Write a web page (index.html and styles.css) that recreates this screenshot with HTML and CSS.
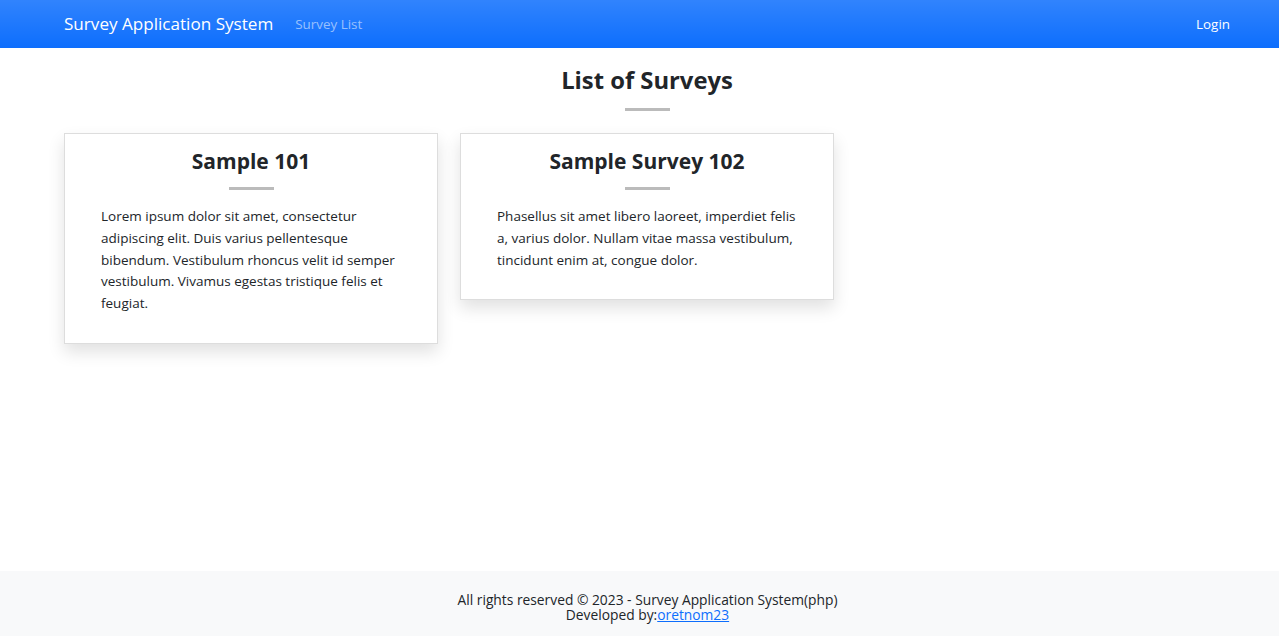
FILE: index.html
```html
<!DOCTYPE html>
<html lang="en">
<head>
<meta charset="utf-8">
<title>Survey Application System</title>
<link rel="stylesheet" href="styles.css">
</head>
<body>
<div class="page">
  <nav class="navbar">
    <div class="nav-inner">
      <a class="brand" href="#">Survey Application System</a>
      <a class="nav-link muted" href="#">Survey List</a>
      <span class="spacer"></span>
      <a class="nav-link" href="#">Login</a>
    </div>
  </nav>
  <main class="main">
    <h2 class="page-title">List of Surveys</h2>
    <hr class="bar">
    <div class="grid">
      <div class="card">
        <h3 class="card-title">Sample 101</h3>
        <hr class="bar">
        <p class="card-text">Lorem ipsum dolor sit amet, consectetur adipiscing elit. Duis varius pellentesque bibendum. Vestibulum rhoncus velit id semper vestibulum. Vivamus egestas tristique felis et feugiat.</p>
      </div>
      <div class="card">
        <h3 class="card-title">Sample Survey 102</h3>
        <hr class="bar">
        <p class="card-text">Phasellus sit amet libero laoreet, imperdiet felis a, varius dolor. Nullam vitae massa vestibulum, tincidunt enim at, congue dolor.</p>
      </div>
    </div>
  </main>
  <footer class="footer">
    <div>All rights reserved &copy; 2023 - Survey Application System(php)</div>
    <div>Developed by:<a href="#">oretnom23</a></div>
  </footer>
</div>
</body>
</html>
```
FILE: styles.css
```css
* { box-sizing: border-box; }
html, body { margin: 0; padding: 0; }
body {
  font-family: "Open Sans", "Noto Sans", sans-serif;
  color: #212529;
  background: #fff;
}
.page {
  min-height: 636px;
  display: flex;
  flex-direction: column;
}
.navbar {
  height: 48px;
  background: #0d6efd linear-gradient(180deg, rgba(255,255,255,.15), rgba(255,255,255,0));
}
.nav-inner {
  height: 47px;
  margin-left: 64px;
  width: 1166px;
  display: flex;
  align-items: center;
}
.brand {
  color: #fff;
  text-decoration: none;
  font-size: 17.1px;
  margin-right: 22px;
}
.nav-link {
  color: #fff;
  text-decoration: none;
  font-size: 13.4px;
}
.nav-link.muted { color: rgba(255,255,255,.55); }
.spacer { flex: 1; }
.main {
  flex: 1;
  margin-left: 64px;
  width: 1166px;
  padding-top: 14px;
}
.page-title {
  margin: 0;
  text-align: center;
  font-size: 23.8px;
  font-weight: 700;
  line-height: 36px;
}
.bar {
  width: 45px;
  height: 3px;
  border: 0;
  background: #bbb;
  margin: 10px auto 0;
}
.grid {
  display: grid;
  grid-template-columns: repeat(3, 1fr);
  gap: 22px;
  align-items: start;
  margin-top: 22px;
}
.card {
  border: 1px solid #ddd;
  background: #fff;
  box-shadow: 0 8px 16px rgba(0,0,0,.12);
  padding: 13px 36px 28px;
}
.card-title {
  margin: 0;
  text-align: center;
  font-size: 21px;
  font-weight: 700;
  line-height: 28px;
}
.card .bar { margin-top: 12px; }
.card-text {
  margin: 16px 0 0;
  font-size: 13.5px;
  line-height: 21.8px;
}
.footer {
  height: 65px;
  background: #f8f9fa;
  text-align: center;
  font-size: 13.8px;
  line-height: 14.5px;
  padding: 22px 0 0 16px;
}
.footer a { color: #0d6efd; }
```
